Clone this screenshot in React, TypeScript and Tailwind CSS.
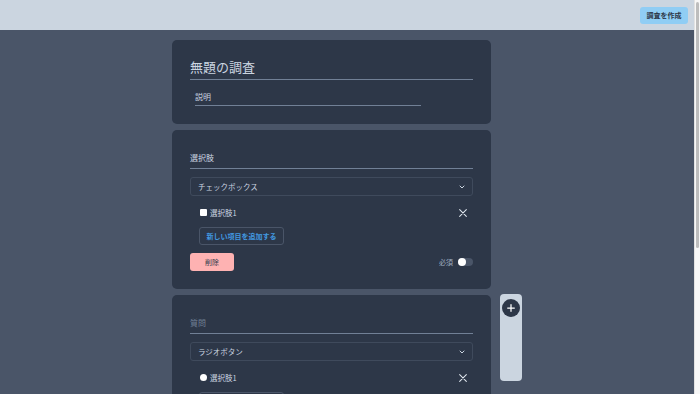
const font = { fontFamily: '"Noto Sans CJK JP", "Noto Sans", sans-serif' };

const Chevron = () => (
  <svg width="8" height="8" viewBox="0 0 24 24" fill="none" stroke="#cbd5e0" strokeWidth="3" strokeLinecap="round" strokeLinejoin="round">
    <path d="M6 9l6 6 6-6" />
  </svg>
);

const Close = () => (
  <svg width="10" height="10" viewBox="0 0 24 24" fill="none" stroke="#e2e8f0" strokeWidth="2.5" strokeLinecap="round">
    <path d="M4 4l16 16M20 4L4 20" />
  </svg>
);

const QuestionCard = ({ label, placeholder, type }: { label: string; placeholder?: boolean; type: 'checkbox' | 'radio' }) => (
  <div className="rounded-[5px] bg-[#2d3748] p-[18px]">
    <div className={`flex h-[21px] items-center border-b border-[#718096] text-[8px] ${placeholder ? 'text-[#718096]' : 'text-[#cbd5e0]'}`}>
      {label}
    </div>
    <div className="mt-[8px] flex h-[19px] items-center justify-between rounded-[3px] border border-[#3f4a5c] pl-[7px] pr-[6px] text-[7.5px] text-[#cbd5e0]">
      <span>{type === 'checkbox' ? 'チェックボックス' : 'ラジオボタン'}</span>
      <Chevron />
    </div>
    <div className="mt-[8px] flex h-[17px] items-center justify-between pl-[10px] pr-[5px]">
      <div className="flex items-center gap-[3px] text-[7.5px] text-[#cbd5e0]">
        <span className={`block h-[7px] w-[7px] bg-white ${type === 'radio' ? 'rounded-full' : 'rounded-[1px]'}`} />
        <span>選択肢1</span>
      </div>
      <Close />
    </div>
    <div className="mt-[6px] pl-[9px]">
      <div className="flex h-[18px] w-[85px] items-center justify-center rounded-[3px] border border-[#4a5568] text-[7px] font-bold text-[#4299e1]">
        新しい項目を追加する
      </div>
    </div>
    <div className="mt-[8px] flex items-center justify-between">
      <div className="flex h-[18px] w-[44px] items-center justify-center rounded-[3px] bg-[#feb2b2] text-[7px] text-[#2d3748]">
        削除
      </div>
      <div className="flex items-center gap-[5px] text-[7px] text-[#a0aec0]">
        <span>必須</span>
        <span className="flex h-[8px] w-[15px] items-center rounded-full bg-[#4a5568]">
          <span className="block h-[8px] w-[8px] rounded-full bg-white" />
        </span>
      </div>
    </div>
  </div>
);

export default function App() {
  return (
    <div style={font} className="flex h-screen overflow-hidden bg-[#4a5568]">
      <div className="flex-1">
        <header className="flex h-[30px] items-center justify-end bg-[#cbd5e0] pr-[6px]">
          <button className="h-[17px] w-[48px] rounded-[3px] bg-[#90cdf4] text-[7px] font-bold text-[#2d3748]">調査を作成</button>
        </header>
        <main className="flex justify-center pt-[10px]">
          <div className="flex w-[350px] gap-[9px]">
            <div className="flex w-[319px] flex-col gap-[6px]">
              <div className="rounded-[5px] bg-[#2d3748] p-[18px]">
                <div className="flex h-[22px] items-center border-b border-[#718096] pb-[3px] text-[13px] text-[#cbd5e0]">無題の調査</div>
                <div className="mt-[9px] ml-[5px] flex h-[17px] w-[226px] items-center border-b border-[#718096] text-[8px] text-[#cbd5e0]">
                  説明
                </div>
              </div>
              <QuestionCard label="選択肢" type="checkbox" />
              <QuestionCard label="質問" placeholder type="radio" />
            </div>
            <div className="mt-[254px] h-[87px] w-[22px] rounded-[4px] bg-[#cbd5e0] pt-[5px]">
              <div className="mx-auto flex h-[18px] w-[18px] items-center justify-center rounded-full bg-[#2d3748]">
                <svg width="10" height="10" viewBox="0 0 24 24" fill="none" stroke="white" strokeWidth="3" strokeLinecap="round">
                  <path d="M12 4v16M4 12h16" />
                </svg>
              </div>
            </div>
          </div>
        </main>
      </div>
      <div className="w-[6px] border-l border-[#e2e2e2] bg-[#f7f7f7] pt-[2px]">
        <div className="mx-auto h-[246px] w-[3px] rounded-full bg-[#bdbdbd]" />
      </div>
    </div>
  );
}
